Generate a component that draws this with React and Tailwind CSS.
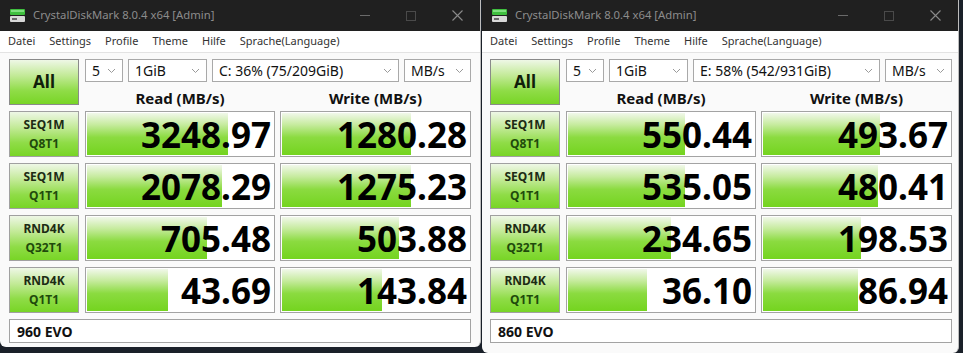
import React from "react";

// green fill used by bars, label boxes and the All button
const barFill = "bg-[linear-gradient(to_bottom,#f1f8ea_0%,#c6eb9e_28%,#8bdb40_58%,#74d41f_100%)]";
const boxFill = "bg-[linear-gradient(to_bottom,#eef7e6_0%,#c3ea98_35%,#8fdc47_70%,#78d526_100%)]";

const windows = [
  {
    drive: "C: 36% (75/209GiB)",
    name: "960 EVO",
    width: "w-[481px]",
    height: "h-[347px]",
    pad: "pl-[9px] pr-[9px]",
    rows: [
      { a: "SEQ1M", b: "Q8T1", read: "3248.97", rp: 75, write: "1280.28", wp: 68 },
      { a: "SEQ1M", b: "Q1T1", read: "2078.29", rp: 72, write: "1275.23", wp: 68 },
      { a: "RND4K", b: "Q32T1", read: "705.48", rp: 64, write: "503.88", wp: 62 },
      { a: "RND4K", b: "Q1T1", read: "43.69", rp: 43, write: "143.84", wp: 53 },
    ],
  },
  {
    drive: "E: 58% (542/931GiB)",
    name: "860 EVO",
    width: "w-[477px]",
    height: "h-[353px]",
    pad: "pl-[8px] pr-[6px]",
    rows: [
      { a: "SEQ1M", b: "Q8T1", read: "550.44", rp: 62, write: "493.67", wp: 62 },
      { a: "SEQ1M", b: "Q1T1", read: "535.05", rp: 62, write: "480.41", wp: 61 },
      { a: "RND4K", b: "Q32T1", read: "234.65", rp: 55, write: "198.53", wp: 52 },
      { a: "RND4K", b: "Q1T1", read: "36.10", rp: 42, write: "86.94", wp: 50 },
    ],
  },
];

const AppIcon = () => (
  <svg width="17" height="15" viewBox="0 0 17 15">
    <rect x="1" y="1" width="15" height="6" rx="1" fill="#3fbf3f" />
    <rect x="2" y="2" width="13" height="2" fill="#7fe07f" />
    <rect x="1" y="8" width="15" height="6" rx="1" fill="#d8d8d8" />
    <rect x="3" y="10" width="5" height="2" fill="#6a6a6a" />
  </svg>
);

const Chevron = () => (
  <svg width="9" height="6" viewBox="0 0 9 6" className="shrink-0">
    <path d="M1 1l3.5 3.5L8 1" fill="none" stroke="#9a9a9a" strokeWidth="1" />
  </svg>
);

const Select = ({ text, w }) => (
  <div className={`${w} h-[23px] flex items-center justify-between border border-[#a9a9a9] bg-white pl-[6px] pr-[6px] text-[14px] leading-none text-[#111]`}>
    <span>{text}</span>
    <Chevron />
  </div>
);

const Label = ({ a, b }) => (
  <div className={`w-[71px] h-[46px] flex flex-col items-center justify-center border border-[#a0a0a0] ${boxFill} text-[12px] font-bold leading-[19px]`}>
    <span className="text-[#1d2b14]">{a}</span>
    <span className="text-[#1f4a0c]">{b}</span>
  </div>
);

const Cell = ({ value, pct, w }) => (
  <div className={`relative ${w} h-[46px] border border-[#a3a3a3] bg-white overflow-hidden`}>
    <div className={`absolute top-[1px] bottom-[1px] left-[1px] ${barFill}`} style={{ width: pct + "%" }} />
    <div className="relative flex h-full items-center justify-end pr-[3px] text-[35px] font-bold leading-none text-black">
      {value}
    </div>
  </div>
);

const Window = ({ win }) => (
  <div className={`${win.width} ${win.height} shrink-0 flex flex-col bg-[#fafafa] border-r border-[#bdbdbd] rounded-b-[6px] overflow-hidden`}>
    {/* title bar */}
    <div className="h-[31px] bg-[#202020] flex items-center text-[11.3px] text-[#8c8c8c]">
      <div className="w-[33px] flex justify-center pl-[1px]">
        <AppIcon />
      </div>
      <span>CrystalDiskMark 8.0.4 x64 [Admin]</span>
      <div className="ml-auto flex h-full">
        <div className="w-[46px] flex items-center justify-center">
          <div className="w-[10px] h-[1px] bg-[#6a6a6a]" />
        </div>
        <div className="w-[46px] flex items-center justify-center">
          <div className="w-[10px] h-[10px] border border-[#4a4a4a]" />
        </div>
        <div className="w-[46px] flex items-center justify-center">
          <svg width="11" height="11" viewBox="0 0 11 11">
            <path d="M0.5 0.5l10 10M10.5 0.5l-10 10" stroke="#8a8a8a" strokeWidth="1.1" />
          </svg>
        </div>
      </div>
    </div>

    {/* menu */}
    <div className="h-[22px] bg-white border-b border-[#e3e3e3] flex items-center gap-[14px] pl-[8px] text-[11px] text-[#333]">
      <span>Datei</span>
      <span>Settings</span>
      <span>Profile</span>
      <span>Theme</span>
      <span>Hilfe</span>
      <span>Sprache(Language)</span>
    </div>

    <div className={`${win.pad} pt-[6px] flex flex-col gap-[6px]`}>
      {/* top controls */}
      <div className="flex gap-[6px]">
        <div className={`w-[71px] h-[46px] flex items-center justify-center border border-[#8a8a8a] ${boxFill} text-[17px] font-bold text-[#10200a]`}>
          All
        </div>
        <div className="flex flex-col">
          <div className="flex gap-[5px]">
            <Select text="5" w="w-[38px]" />
            <Select text="1GiB" w="w-[79px]" />
            <Select text={win.drive} w="w-[187px]" />
            <Select text="MB/s" w="w-[67px]" />
          </div>
          <div className="flex gap-[5px] h-[23px] items-end text-[15px] font-bold text-[#111] leading-[14px]">
            <div className="w-[190px] text-center">Read (MB/s)</div>
            <div className="w-[191px] text-center">Write (MB/s)</div>
          </div>
        </div>
      </div>

      {win.rows.map((r) => (
        <div key={r.a + r.b} className="flex">
          <Label a={r.a} b={r.b} />
          <div className="ml-[6px]">
            <Cell value={r.read} pct={r.rp} w="w-[190px]" />
          </div>
          <div className="ml-[5px]">
            <Cell value={r.write} pct={r.wp} w="w-[191px]" />
          </div>
        </div>
      ))}

      {/* comment */}
      <div className="h-[24px] border border-[#a3a3a3] bg-white flex items-center pl-[7px] text-[14px] font-bold text-[#111]">
        {win.name}
      </div>
    </div>
  </div>
);

export default function App() {
  return (
    <div className="w-[963px] h-[353px] bg-[#1a2029] flex items-start gap-[1px] overflow-hidden font-['Noto_Sans',sans-serif]">
      {windows.map((w) => (
        <Window key={w.name} win={w} />
      ))}
    </div>
  );
}
